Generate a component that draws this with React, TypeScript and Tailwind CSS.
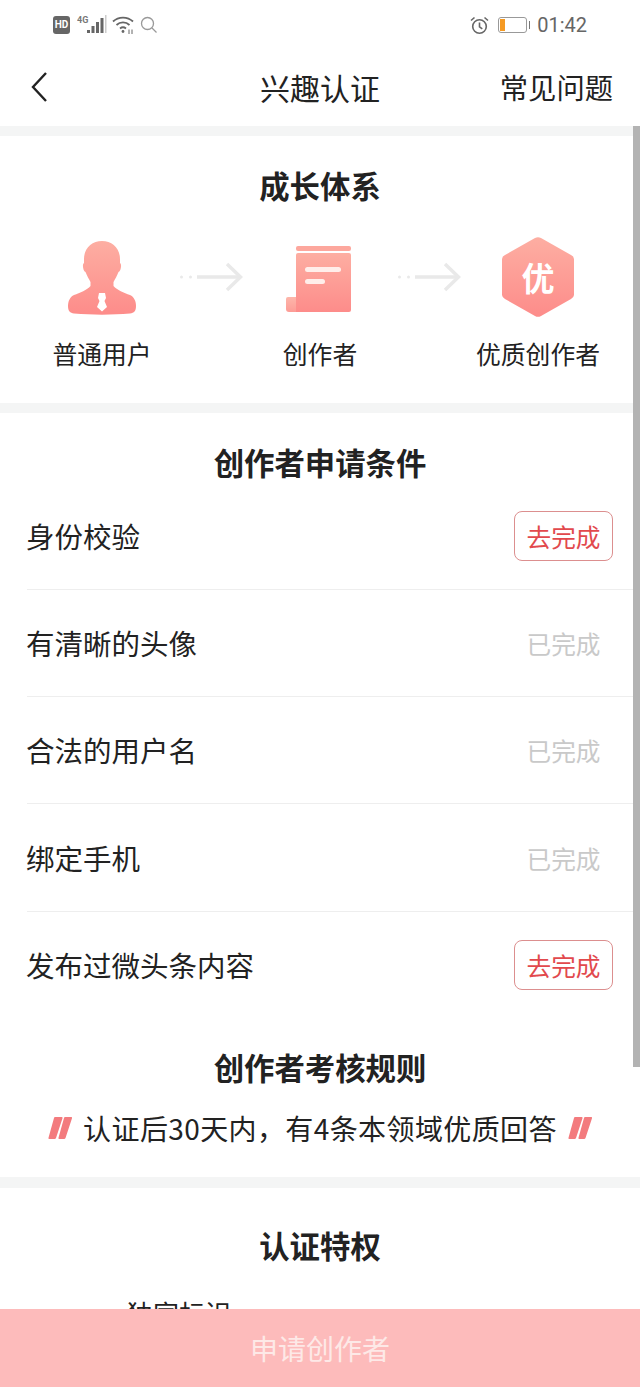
const conditions = [
  { label: "身份校验", done: false, height: "h-[107px]" },
  { label: "有清晰的头像", done: true, height: "h-[107px]" },
  { label: "合法的用户名", done: true, height: "h-[107px]" },
  { label: "绑定手机", done: true, height: "h-[108px]" },
  { label: "发布过微头条内容", done: false, height: "h-[106px]" },
];

function StatusBar() {
  return (
    <div className="flex h-[50px] items-center pl-[53px] pr-[53px] text-[#666]">
      <div className="flex h-[18px] w-[17px] items-center justify-center rounded-[3px] bg-[#666] font-['Roboto',sans-serif] text-[10px] font-bold leading-none text-white">
        HD
      </div>
      <svg className="ml-[7px]" width="30" height="20" viewBox="0 0 30 20" fill="none">
        <text x="0" y="8" fontSize="9" fontWeight="700" fill="#777" fontFamily="Roboto, sans-serif">4G</text>
        <rect x="10" y="15" width="3" height="3" fill="#666" />
        <rect x="14.500" y="11" width="3" height="7" fill="#666" />
        <rect x="19" y="7" width="3" height="11" fill="#666" />
        <rect x="23.500" y="3" width="3" height="15" fill="#666" />
        <rect x="28" y="0" width="1.5" height="18" fill="#ccc" />
      </svg>
      <svg className="ml-[5px]" width="22" height="20" viewBox="0 0 22 20" fill="none" stroke="#666" strokeWidth="1.8">
        <path d="M1 6.5C6.5 1.2 15.5 1.2 21 6.5" />
        <path d="M4.5 10C8.2 6.6 13.8 6.6 17.5 10" />
        <path d="M8 13.5C9.8 12 12.2 12 14 13.5" />
        <circle cx="11" cy="16.5" r="1.4" fill="#666" stroke="none" />
        <path d="M17 14.5v4.5M20 14.5v4.5" strokeWidth="1" />
      </svg>
      <svg className="ml-[6px]" width="18" height="18" viewBox="0 0 18 18" fill="none" stroke="#999" strokeWidth="1.3">
        <circle cx="7.5" cy="7.5" r="6" />
        <path d="M12 12l4.5 4.5" />
      </svg>
      <div className="flex-1" />
      <svg width="19" height="19" viewBox="0 0 19 19" fill="none" stroke="#666" strokeWidth="1.6">
        <circle cx="9.5" cy="10.5" r="6.8" />
        <path d="M9.5 6.5v4.3l2.8 2" />
        <path d="M1 4.5L4.5 1.5M18 4.5l-3.5-3" />
      </svg>
      <div className="ml-[9px] flex items-center">
        <div className="flex h-[16px] w-[29px] items-center rounded-[3px] border border-[#999] pl-[1px]">
          <div className="h-[12px] w-[5px] bg-[#f59a23]" />
        </div>
        <div className="ml-[2px] h-[8px] w-[1.5px] bg-[#777]" />
      </div>
      <span className="ml-[7px] font-['Roboto',sans-serif] text-[20px] leading-none">01:42</span>
    </div>
  );
}

function NavBar() {
  return (
    <div className="relative flex h-[76px] items-center justify-between pb-[2px] pl-[30px] pr-[27px]">
      <svg width="18" height="32" viewBox="0 0 18 32" fill="none" stroke="#222" strokeWidth="2.4">
        <path d="M16 2L3 16l13 14" />
      </svg>
      <span className="absolute left-0 right-0 text-center text-[30px] leading-[40px] text-[#222]">兴趣认证</span>
      <span className="relative text-[28.3px] leading-[40px] text-[#222]">常见问题</span>
    </div>
  );
}

function PersonIcon() {
  return (
    <svg className="mt-[2px]" width="70" height="74" viewBox="0 0 70 74">
      <defs>
        <linearGradient id="personFill" x1="0" y1="0" x2="0" y2="1">
          <stop offset="0" stopColor="#fdaea2" />
          <stop offset="1" stopColor="#fd8c8a" />
        </linearGradient>
      </defs>
      <path
        d="M35 0C45 0 53 7 53 18V22C55 23 54 30 51.500 31C50 35 48 38 46.500 41V45C50 49 57 52 63 54C67 56 69 60 69 65C69 70 67 72 63 72.500C45 74 25 74 7 72.500C3 72 1 70 1 65C1 60 3 56 7 54C13 52 20 49 23.500 45V41C22 38 20 35 18.500 31C16 30 15 23 17 22V18C17 7 25 0 35 0Z"
        fill="url(#personFill)"
      />
      <path d="M32 52h6l1 5-1.500 3 2.500 6-5 4.500-5-4.500 2.500-6-1.500-3z" fill="#fff" />
    </svg>
  );
}

function DocIcon() {
  return (
    <svg className="mr-[2px] mt-[4px]" width="66" height="68" viewBox="0 0 66 68">
      <defs>
        <linearGradient id="docFill" x1="0" y1="0" x2="0" y2="1">
          <stop offset="0" stopColor="#fdaea2" />
          <stop offset="1" stopColor="#fd8c8a" />
        </linearGradient>
        <linearGradient id="docTab" x1="0" y1="0" x2="0" y2="1">
          <stop offset="0" stopColor="#fdb6aa" />
          <stop offset="1" stopColor="#fd9c96" />
        </linearGradient>
      </defs>
      <rect x="10" y="1" width="55" height="5" rx="2" fill="#fda79d" />
      <path d="M12 8H63a2 2 0 0 1 2 2V65a2 2 0 0 1-2 2H10V10a2 2 0 0 1 2-2Z" fill="url(#docFill)" />
      <path d="M2 52H10V67H3a3 3 0 0 1-3-3V54a2 2 0 0 1 2-2Z" fill="url(#docTab)" />
      <rect x="19" y="22" width="36" height="5" rx="2.500" fill="#ffeeea" />
      <rect x="19" y="34" width="20" height="5" rx="2.500" fill="#ffeeea" />
    </svg>
  );
}

function HexIcon() {
  return (
    <div className="relative h-[80px] w-[72px]">
      <svg width="72" height="80" viewBox="0 0 72 80">
        <defs>
          <linearGradient id="hexFill" x1="0" y1="0" x2="0" y2="1">
            <stop offset="0" stopColor="#fdaea2" />
            <stop offset="1" stopColor="#fd8c8a" />
          </linearGradient>
        </defs>
        <path
          d="M33 1a6 6 0 0 1 6 0L69 18a5 5 0 0 1 3 5V57a5 5 0 0 1-3 5L39 79a6 6 0 0 1-6 0L3 62a5 5 0 0 1-3-5V23a5 5 0 0 1 3-5Z"
          fill="url(#hexFill)"
        />
      </svg>
      <span className="absolute inset-0 flex items-center justify-center text-[33px] font-bold leading-none text-white">优</span>
    </div>
  );
}

function Arrow() {
  return (
    <div className="flex h-[80px] w-[82px] items-center justify-center">
      <svg width="64" height="30" viewBox="0 0 64 30" fill="none" stroke="#e9e9e9" strokeWidth="3.500">
        <circle cx="2.500" cy="15" r="1.500" fill="#e9e9e9" stroke="none" />
        <circle cx="11.500" cy="15" r="1.500" fill="#e9e9e9" stroke="none" />
        <path d="M18 15H61" />
        <path d="M48 2L61.500 15 48 28" />
      </svg>
    </div>
  );
}

function Step({ icon, label }: { icon: React.ReactNode; label: string }) {
  return (
    <div className="flex w-[136px] shrink-0 flex-col items-center">
      <div className="flex h-[80px] items-center">{icon}</div>
      <span className="mt-[19px] whitespace-nowrap text-[24.8px] leading-[34px] text-[#222]">{label}</span>
    </div>
  );
}

function Quote() {
  return (
    <svg width="24" height="24" viewBox="0 0 24 24" fill="#f37b7e">
      <path d="M7 1h6.500a1 1 0 0 1 1 1.300L8 22a1.500 1.500 0 0 1-1.500 1H1.500a1 1 0 0 1-1-1.300L6 2a1.500 1.500 0 0 1 1-1Z" />
      <path d="M17 1h6a1 1 0 0 1 1 1.300L17.500 22a1.500 1.500 0 0 1-1.500 1h-4.500a1 1 0 0 1-1-1.300L16 2a1.500 1.500 0 0 1 1-1Z" />
    </svg>
  );
}

export default function App() {
  return (
    <div className="relative h-[1387px] w-[640px] overflow-hidden bg-white font-['Noto_Sans_CJK_SC','Noto_Sans',sans-serif]">
      <StatusBar />
      <NavBar />

      <div className="h-[10px] bg-[#f4f5f5]" />

      <section className="h-[267px] pt-[29px]">
        <h2 className="text-center text-[30.4px] font-bold leading-[40px] text-[#222]">成长体系</h2>
        <div className="mt-[32px] flex justify-center">
          <Step icon={<PersonIcon />} label="普通用户" />
          <Arrow />
          <Step icon={<DocIcon />} label="创作者" />
          <Arrow />
          <Step icon={<HexIcon />} label="优质创作者" />
        </div>
      </section>

      <div className="h-[10px] bg-[#f4f5f5]" />

      <section className="h-[764px]">
        <h2 className="flex h-[70px] items-start justify-center pt-[29px] text-[30.4px] font-bold leading-[40px] text-[#222]">创作者申请条件</h2>
        <div className="pl-[27px]">
          {conditions.map((item, i) => (
            <div
              key={item.label}
              className={`flex ${item.height} items-center justify-between pr-[27px] ${i < conditions.length - 1 ? "border-b border-[#eeeeee]" : ""}`}
            >
              <span className="-ml-px text-[28.5px] leading-[40px] text-[#222]">{item.label}</span>
              {item.done ? (
                <span className="w-[99px] text-center text-[24.7px] leading-[34px] text-[#c9c9c9]">已完成</span>
              ) : (
                <span className="flex h-[50px] w-[99px] items-center justify-center rounded-[8px] border border-[#dc8f8f] text-[24.7px] leading-[34px] text-[#e2494d]">
                  去完成
                </span>
              )}
            </div>
          ))}
        </div>
        <h2 className="mt-[29px] text-center text-[30.4px] font-bold leading-[40px] text-[#222]">创作者考核规则</h2>
        <div className="mt-[21px] flex items-center justify-center gap-[11px]">
          <Quote />
          <span className="whitespace-nowrap text-[28px] leading-[40px] tracking-[0.4px] text-[#222]">认证后30天内，有4条本领域优质回答</span>
          <Quote />
        </div>
      </section>

      <div className="h-[11px] bg-[#f4f5f5]" />

      <section className="pt-[37px]">
        <h2 className="text-center text-[30.4px] font-bold leading-[40px] text-[#222]">认证特权</h2>
        <p className="mt-[30px] pl-[127px] text-[26px] leading-[36px] text-[#222]">独家标识</p>
      </section>

      <div className="absolute right-0 top-[126px] h-[941px] w-[7px] bg-[#b3b3b3]" />

      <div className="absolute bottom-0 left-0 right-0 flex h-[78px] items-center justify-center bg-[#fdbbbb] text-[28px] text-[#fde9e7]">
        申请创作者
      </div>
    </div>
  );
}
